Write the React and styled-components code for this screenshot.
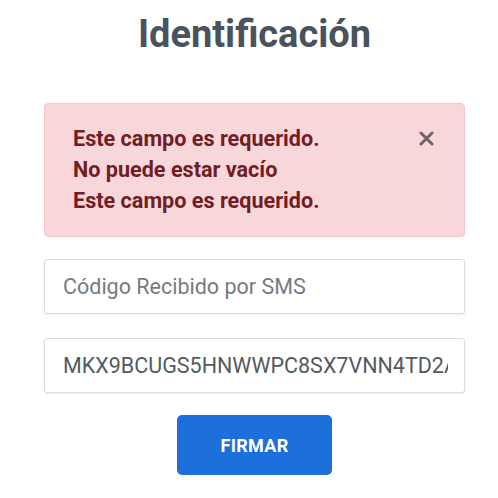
import React from 'react';
import styled, { createGlobalStyle } from 'styled-components';

const GlobalStyle = createGlobalStyle`
  body {
    margin: 0;
    background: #ffffff;
    font-family: Roboto, "Liberation Sans", sans-serif;
  }
`;

const Page = styled.div`
  display: flex;
  flex-direction: column;
  align-items: center;
  width: 421px;
  margin-left: 44px;
  padding-top: 11px;
`;

const Title = styled.h1`
  margin: 0;
  font-size: 38px;
  font-weight: 700;
  line-height: 46px;
  color: #4a525d;
`;

const Alert = styled.div`
  position: relative;
  box-sizing: border-box;
  width: 100%;
  margin-top: 46px;
  padding: 19px 28px 20px 28px;
  background: #f8d7da;
  border: 1px solid #f5c6cb;
  border-radius: 4px;
  color: #721c24;
`;

const AlertLine = styled.div`
  font-size: 21.6px;
  font-weight: 700;
  line-height: 31px;
`;

const Close = styled.button`
  position: absolute;
  top: 24px;
  right: 28px;
  display: flex;
  align-items: center;
  justify-content: center;
  width: 20px;
  height: 20px;
  padding: 0;
  border: 0;
  background: none;
  color: #6f6365;
  cursor: pointer;
`;

const Field = styled.input`
  box-sizing: border-box;
  width: 100%;
  height: 55px;
  margin-top: ${({ $gap }) => $gap}px;
  padding: 0 16px 0 18px;
  border: 1px solid #dcdcdc;
  border-radius: 3px;
  box-shadow: 0 1px 2px rgba(0, 0, 0, 0.08);
  font-family: Roboto, "Liberation Sans", sans-serif;
  font-size: 21.5px;
  color: #555a60;
  outline: none;

  &::placeholder {
    color: #777b80;
  }
`;

const Submit = styled.button`
  width: 155px;
  height: 60px;
  margin-top: 22px;
  border: 0;
  border-radius: 5px;
  background: #1d6fdc;
  color: #ffffff;
  font-family: Roboto, "Liberation Sans", sans-serif;
  font-size: 18px;
  font-weight: 700;
  letter-spacing: 0.3px;
  cursor: pointer;
`;

function App() {
  return (
    <>
      <GlobalStyle />
      <Page>
        <Title>Identificación</Title>
        <Alert>
          <AlertLine>Este campo es requerido.</AlertLine>
          <AlertLine>No puede estar vacío</AlertLine>
          <AlertLine>Este campo es requerido.</AlertLine>
          <Close aria-label="Cerrar">
            <svg width="15" height="15" viewBox="0 0 15 15">
              <path d="M2 2 L13 13 M13 2 L2 13" stroke="currentColor" strokeWidth="3" strokeLinecap="round" />
            </svg>
          </Close>
        </Alert>
        <Field $gap={22} placeholder="Código Recibido por SMS" />
        <Field $gap={24} defaultValue="MKX9BCUGS5HNWWPC8SX7VNN4TD2A7QX" />
        <Submit>FIRMAR</Submit>
      </Page>
    </>
  );
}

export default App;
